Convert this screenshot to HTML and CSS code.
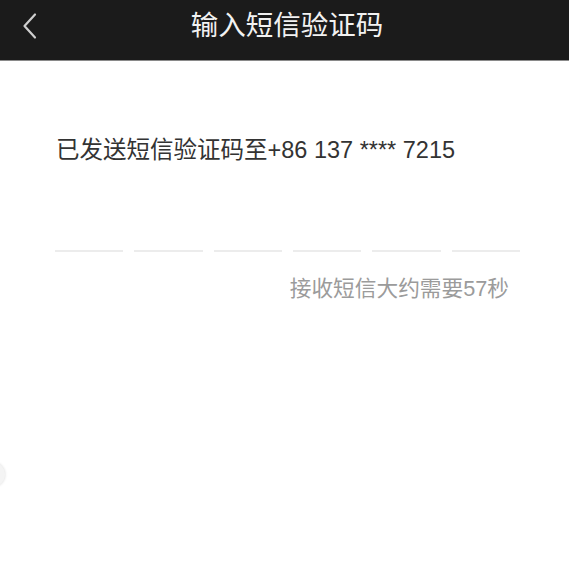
FILE: index.html
```html
<!DOCTYPE html>
<html lang="zh-CN">
<head>
<meta charset="utf-8">
<title>输入短信验证码</title>
<link rel="stylesheet" href="styles.css">
</head>
<body>
<div class="page">
  <header class="nav">
    <span class="back">
      <svg width="16" height="28" viewBox="0 0 16 28"><path d="M14 2.5 L3.5 14 L14 25.5" fill="none" stroke="#cfcfcf" stroke-width="2.2" stroke-linecap="round" stroke-linejoin="round"/></svg>
    </span>
    <h1 class="title">输入短信验证码</h1>
  </header>
  <main class="content">
    <p class="sent">已发送短信验证码至+86 137 **** 7215</p>
    <div class="code">
      <span class="slot"></span><span class="slot"></span><span class="slot"></span><span class="slot"></span><span class="slot"></span><span class="slot"></span>
    </div>
    <p class="hint">接收短信大约需要57秒</p>
  </main>
  <span class="float"></span>
</div>
</body>
</html>
```
FILE: styles.css
```css
html, body {
  margin: 0;
  padding: 0;
  background: #fff;
}
body {
  font-family: "Liberation Sans", "Noto Sans CJK SC", sans-serif;
}
.page {
  position: relative;
  width: 569px;
  height: 583px;
  overflow: hidden;
  background: #fff;
}
.nav {
  position: relative;
  box-sizing: border-box;
  height: 61px;
  padding: 0 0 12px 5px;
  background: #1b1b1b;
  border-bottom: 1px solid #8a8a8a;
  display: flex;
  align-items: center;
  justify-content: center;
}
.back {
  position: absolute;
  left: 21px;
  top: 12px;
  display: flex;
}
.title {
  margin: 0;
  font-family: "Noto Sans CJK SC", sans-serif;
  font-size: 27.5px;
  font-weight: 400;
  color: #f2f2f2;
  line-height: 1;
}
.content {
  padding: 0 49px 0 55px;
}
.sent {
  margin: 73px 0 0 1px;
  font-size: 23.5px;
  line-height: 32px;
  color: #333;
}
.code {
  margin-top: 84px;
  display: flex;
  gap: 11px;
}
.slot {
  flex: 1;
  height: 2px;
  background: #ececec;
}
.hint {
  margin: 22px 11px 0 0;
  text-align: right;
  font-size: 21.7px;
  line-height: 30px;
  color: #9b9b9b;
}
.float {
  position: absolute;
  left: -20px;
  top: 462px;
  width: 25px;
  height: 25px;
  border-radius: 50%;
  background: #f4f4f4;
  box-shadow: 0 0 3px rgba(0,0,0,0.15);
}
```
